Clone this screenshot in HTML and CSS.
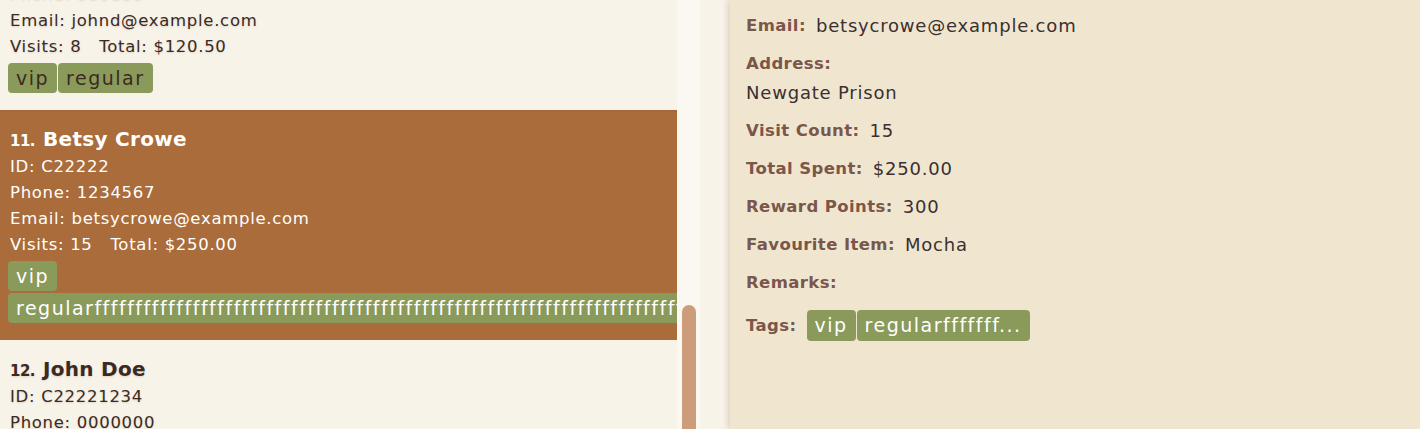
FILE: index.html
```html
<!DOCTYPE html>
<html>
<head>
<meta charset="utf-8">
<link rel="stylesheet" href="styles.css">
</head>
<body>
<div class="app">
  <div class="list-pane">
    <div class="list">
      <div class="list-inner">
        <div class="card">
          <div class="title"><span class="idx">10.</span><span class="name">John Doe</span></div>
          <div class="line">ID: C11111</div>
          <div class="line">Phone: 000000</div>
          <div class="line">Email: johnd@example.com</div>
          <div class="line">Visits: 8&nbsp;&nbsp;&nbsp;Total: $120.50</div>
          <div class="tags"><span class="tag">vip</span><span class="tag">regular</span></div>
        </div>
        <div class="card selected">
          <div class="title"><span class="idx">11.</span><span class="name">Betsy Crowe</span></div>
          <div class="line">ID: C22222</div>
          <div class="line">Phone: 1234567</div>
          <div class="line">Email: betsycrowe@example.com</div>
          <div class="line">Visits: 15&nbsp;&nbsp;&nbsp;Total: $250.00</div>
          <div class="tags"><span class="tag">vip</span><span class="tag">regularffffffffffffffffffffffffffffffffffffffffffffffffffffffffffffffffffffffffffffffffffffffffffffffffffffffffffff</span></div>
        </div>
        <div class="card">
          <div class="title"><span class="idx">12.</span><span class="name">John Doe</span></div>
          <div class="line">ID: C22221234</div>
          <div class="line">Phone: 0000000</div>
          <div class="line">Email: john@example.com</div>
        </div>
      </div>
    </div>
    <div class="scrollbar"><div class="thumb"></div></div>
  </div>
  <div class="gutter"></div>
  <div class="details">
    <div class="row"><span class="label">Email:</span><span class="value">betsycrowe@example.com</span></div>
    <div class="row block"><span class="label">Address:</span><span class="value">Newgate Prison</span></div>
    <div class="row"><span class="label">Visit Count:</span><span class="value">15</span></div>
    <div class="row"><span class="label">Total Spent:</span><span class="value">$250.00</span></div>
    <div class="row"><span class="label">Reward Points:</span><span class="value">300</span></div>
    <div class="row"><span class="label">Favourite Item:</span><span class="value">Mocha</span></div>
    <div class="row"><span class="label">Remarks:</span></div>
    <div class="row tagrow"><span class="label">Tags:</span><div class="dtags"><div class="dtag">vip</div><div class="dtag">regularfffffff...</div></div></div>
  </div>
</div>
</body>
</html>
```
FILE: styles.css
```css
html, body {
  margin: 0;
  padding: 0;
}
body {
  font-family: "DejaVu Sans", "Open Sans", sans-serif;
  background: #f8f3e9;
}
.app {
  display: flex;
  height: 429px;
  overflow: hidden;
}
.list-pane {
  display: flex;
  width: 700px;
  flex: none;
}
.list {
  width: 677px;
  height: 429px;
  overflow: hidden;
  background: #f8f3e9;
}
.list-inner {
  margin-top: -88px;
}
.card {
  padding: 14px 0 17px 10px;
  color: #3b2a22;
  overflow: hidden;
  text-shadow: 0 1px 2px rgba(60, 40, 20, 0.15);
}
.card.selected {
  background: #a96c3a;
  color: #ffffff;
  border-top: 2px solid #a4683a;
  padding-top: 12px;
  text-shadow: none;
}
.title {
  display: flex;
  align-items: baseline;
  height: 30px;
  line-height: 30px;
}
.idx {
  font-size: 15px;
  font-weight: 600;
  width: 33px;
  letter-spacing: -0.5px;
}
.name {
  font-size: 20px;
  font-weight: 700;
  letter-spacing: 0.3px;
}
.line {
  font-size: 16.5px;
  line-height: 26px;
  height: 26px;
  white-space: nowrap;
  letter-spacing: 0.7px;
}
.tags {
  display: flex;
  flex-wrap: wrap;
  gap: 2px 1px;
  margin-top: 3px;
  margin-left: -2px;
}
.tag {
  background: #8a9a5b;
  border-radius: 4px;
  padding: 0 8px;
  font-size: 19px;
  letter-spacing: 1.5px;
  line-height: 30px;
  height: 30px;
  white-space: nowrap;
  text-shadow: none;
}
.scrollbar {
  width: 23px;
  background: #faf8f1;
  display: flex;
  flex-direction: column;
  justify-content: flex-end;
  padding-left: 5px;
  box-sizing: border-box;
}
.thumb {
  width: 14px;
  height: 130px;
  margin-bottom: -6px;
  background: #cd9d7b;
  border-radius: 7px;
}
.gutter {
  width: 30px;
  flex: none;
  background: #f8f3e9;
}
.details {
  flex: 1;
  background: #f0e6d0;
  box-shadow: -3px 0 5px rgba(120, 90, 50, 0.18);
  padding: 12px 16px;
  display: flex;
  flex-direction: column;
  gap: 10px;
}
.row {
  display: flex;
  align-items: center;
  gap: 10px;
  min-height: 28px;
  font-size: 18px;
  line-height: 28px;
}
.row.block {
  flex-direction: column;
  align-items: flex-start;
  gap: 1px;
}
.label {
  color: #7b574a;
  font-weight: 600;
  font-size: 16.5px;
  letter-spacing: 0.4px;
}
.value {
  color: #3b2f2f;
  letter-spacing: 0.8px;
}
.tagrow {
  margin-top: 3px;
}
.dtags {
  display: flex;
  gap: 1px;
}
.dtag {
  background: #8a9a5b;
  color: #ffffff;
  border-radius: 4px;
  padding: 0 8px;
  font-size: 19px;
  letter-spacing: 1.5px;
  line-height: 31px;
  height: 31px;
}
```
